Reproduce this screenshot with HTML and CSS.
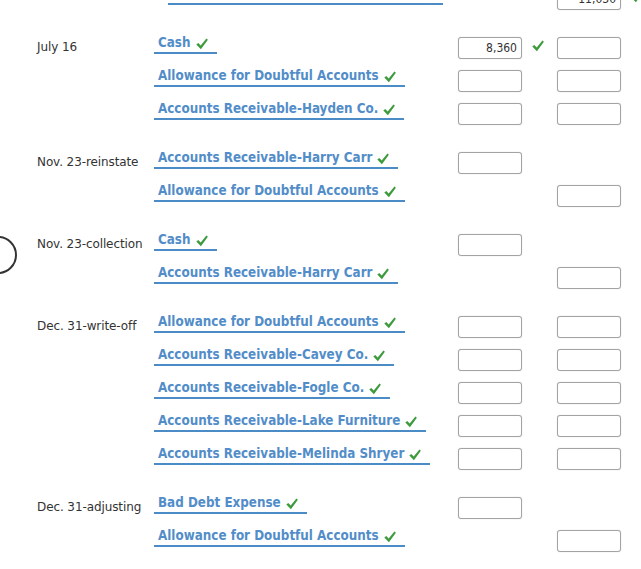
FILE: index.html
```html
<!DOCTYPE html>
<html>
<head>
<meta charset="utf-8">
<link rel="stylesheet" href="styles.css">
</head>
<body>
<div class="ring"></div>
<div class="journal">
  <div class="group partial">
    <div class="row">
      <div class="label"></div>
      <div class="acct-cell"><span class="acct indent"><span class="hidden-name">Accounts Receivable</span><svg class="chk" viewBox="0 0 12 12"><path d="M0.3 6.6 L2.3 4.9 L4.7 7.6 L10.4 0.4 L11.9 1.7 L4.9 11.2 Z"/></svg></span></div>
      <div></div><div></div>
      <input class="amt" type="text" value="11,030">
      <div class="chk-col"><svg class="chk" viewBox="0 0 12 12"><path d="M0.3 6.6 L2.3 4.9 L4.7 7.6 L10.4 0.4 L11.9 1.7 L4.9 11.2 Z"/></svg></div>
    </div>
  </div>

  <div class="group">
    <div class="row">
      <div class="label">July 16</div>
      <div class="acct-cell"><span class="acct">Cash<svg class="chk" viewBox="0 0 12 12"><path d="M0.3 6.6 L2.3 4.9 L4.7 7.6 L10.4 0.4 L11.9 1.7 L4.9 11.2 Z"/></svg></span></div>
      <input class="amt" type="text" value="8,360">
      <div class="chk-col"><svg class="chk" viewBox="0 0 12 12"><path d="M0.3 6.6 L2.3 4.9 L4.7 7.6 L10.4 0.4 L11.9 1.7 L4.9 11.2 Z"/></svg></div>
      <input class="amt" type="text" value="">
    </div>
    <div class="row">
      <div class="label"></div>
      <div class="acct-cell"><span class="acct">Allowance for Doubtful Accounts<svg class="chk" viewBox="0 0 12 12"><path d="M0.3 6.6 L2.3 4.9 L4.7 7.6 L10.4 0.4 L11.9 1.7 L4.9 11.2 Z"/></svg></span></div>
      <input class="amt" type="text" value="">
      <div></div>
      <input class="amt" type="text" value="">
    </div>
    <div class="row">
      <div class="label"></div>
      <div class="acct-cell"><span class="acct">Accounts Receivable-Hayden Co.<svg class="chk" viewBox="0 0 12 12"><path d="M0.3 6.6 L2.3 4.9 L4.7 7.6 L10.4 0.4 L11.9 1.7 L4.9 11.2 Z"/></svg></span></div>
      <input class="amt" type="text" value="">
      <div></div>
      <input class="amt" type="text" value="">
    </div>
  </div>

  <div class="group">
    <div class="row">
      <div class="label">Nov. 23-reinstate</div>
      <div class="acct-cell"><span class="acct">Accounts Receivable-Harry Carr<svg class="chk" viewBox="0 0 12 12"><path d="M0.3 6.6 L2.3 4.9 L4.7 7.6 L10.4 0.4 L11.9 1.7 L4.9 11.2 Z"/></svg></span></div>
      <input class="amt" type="text" value="">
    </div>
    <div class="row">
      <div class="label"></div>
      <div class="acct-cell"><span class="acct">Allowance for Doubtful Accounts<svg class="chk" viewBox="0 0 12 12"><path d="M0.3 6.6 L2.3 4.9 L4.7 7.6 L10.4 0.4 L11.9 1.7 L4.9 11.2 Z"/></svg></span></div>
      <div></div><div></div>
      <input class="amt" type="text" value="">
    </div>
  </div>

  <div class="group">
    <div class="row">
      <div class="label">Nov. 23-collection</div>
      <div class="acct-cell"><span class="acct">Cash<svg class="chk" viewBox="0 0 12 12"><path d="M0.3 6.6 L2.3 4.9 L4.7 7.6 L10.4 0.4 L11.9 1.7 L4.9 11.2 Z"/></svg></span></div>
      <input class="amt" type="text" value="">
    </div>
    <div class="row">
      <div class="label"></div>
      <div class="acct-cell"><span class="acct">Accounts Receivable-Harry Carr<svg class="chk" viewBox="0 0 12 12"><path d="M0.3 6.6 L2.3 4.9 L4.7 7.6 L10.4 0.4 L11.9 1.7 L4.9 11.2 Z"/></svg></span></div>
      <div></div><div></div>
      <input class="amt" type="text" value="">
    </div>
  </div>

  <div class="group">
    <div class="row">
      <div class="label">Dec. 31-write-off</div>
      <div class="acct-cell"><span class="acct">Allowance for Doubtful Accounts<svg class="chk" viewBox="0 0 12 12"><path d="M0.3 6.6 L2.3 4.9 L4.7 7.6 L10.4 0.4 L11.9 1.7 L4.9 11.2 Z"/></svg></span></div>
      <input class="amt" type="text" value="">
      <div></div>
      <input class="amt" type="text" value="">
    </div>
    <div class="row">
      <div class="label"></div>
      <div class="acct-cell"><span class="acct">Accounts Receivable-Cavey Co.<svg class="chk" viewBox="0 0 12 12"><path d="M0.3 6.6 L2.3 4.9 L4.7 7.6 L10.4 0.4 L11.9 1.7 L4.9 11.2 Z"/></svg></span></div>
      <input class="amt" type="text" value="">
      <div></div>
      <input class="amt" type="text" value="">
    </div>
    <div class="row">
      <div class="label"></div>
      <div class="acct-cell"><span class="acct">Accounts Receivable-Fogle Co.<svg class="chk" viewBox="0 0 12 12"><path d="M0.3 6.6 L2.3 4.9 L4.7 7.6 L10.4 0.4 L11.9 1.7 L4.9 11.2 Z"/></svg></span></div>
      <input class="amt" type="text" value="">
      <div></div>
      <input class="amt" type="text" value="">
    </div>
    <div class="row">
      <div class="label"></div>
      <div class="acct-cell"><span class="acct">Accounts Receivable-Lake Furniture<svg class="chk" viewBox="0 0 12 12"><path d="M0.3 6.6 L2.3 4.9 L4.7 7.6 L10.4 0.4 L11.9 1.7 L4.9 11.2 Z"/></svg></span></div>
      <input class="amt" type="text" value="">
      <div></div>
      <input class="amt" type="text" value="">
    </div>
    <div class="row">
      <div class="label"></div>
      <div class="acct-cell"><span class="acct">Accounts Receivable-Melinda Shryer<svg class="chk" viewBox="0 0 12 12"><path d="M0.3 6.6 L2.3 4.9 L4.7 7.6 L10.4 0.4 L11.9 1.7 L4.9 11.2 Z"/></svg></span></div>
      <input class="amt" type="text" value="">
      <div></div>
      <input class="amt" type="text" value="">
    </div>
  </div>

  <div class="group">
    <div class="row">
      <div class="label">Dec. 31-adjusting</div>
      <div class="acct-cell"><span class="acct">Bad Debt Expense<svg class="chk" viewBox="0 0 12 12"><path d="M0.3 6.6 L2.3 4.9 L4.7 7.6 L10.4 0.4 L11.9 1.7 L4.9 11.2 Z"/></svg></span></div>
      <input class="amt" type="text" value="">
    </div>
    <div class="row">
      <div class="label"></div>
      <div class="acct-cell"><span class="acct">Allowance for Doubtful Accounts<svg class="chk" viewBox="0 0 12 12"><path d="M0.3 6.6 L2.3 4.9 L4.7 7.6 L10.4 0.4 L11.9 1.7 L4.9 11.2 Z"/></svg></span></div>
      <div></div><div></div>
      <input class="amt" type="text" value="">
    </div>
  </div>
</div>
</body>
</html>
```
FILE: styles.css
```css
html, body {
  margin: 0;
  padding: 0;
  background: #fff;
  overflow: hidden;
}
body {
  position: relative;
  width: 641px;
  height: 569px;
  font-family: "DejaVu Sans", sans-serif;
}
.ring {
  position: absolute;
  left: -21px;
  top: 236px;
  width: 34px;
  height: 34px;
  border: 2.5px solid #333;
  border-radius: 50%;
}
.journal {
  display: flex;
  flex-direction: column;
  gap: 27px;
  padding-left: 37px;
}
.group {
  display: flex;
  flex-direction: column;
  gap: 11px;
}
.partial {
  margin-top: -14px;
}
.row {
  display: grid;
  grid-template-columns: 117px 304px 64px 35px 64px 20px;
  align-items: center;
  height: 22px;
}
.label {
  font-family: "DejaVu Sans", sans-serif;
  font-size: 12px;
  letter-spacing: -0.1px;
  color: #333;
  white-space: nowrap;
  padding-bottom: 1px;
}
.acct-cell {
  display: flex;
  align-self: center;
  margin-bottom: 6px;
}
.acct {
  display: inline-flex;
  align-items: flex-start;
  box-sizing: content-box;
  height: 16px;
  padding: 1px 9px 0 4px;
  border-bottom: 2px solid #4b8bc6;
  font-family: "DejaVu Sans Condensed", "DejaVu Sans", sans-serif;
  font-stretch: condensed;
  font-size: 13.3px;
  font-weight: bold;
  line-height: 13px;
  color: #528dc9;
  white-space: nowrap;
}
.acct.indent {
  margin-left: 14px;
  width: 262px;
  justify-content: flex-end;
}
.hidden-name {
  visibility: hidden;
  width: 0;
  overflow: hidden;
}
.chk {
  width: 12px;
  height: 12px;
  fill: #3d9b3d;
  flex: none;
}
.acct .chk {
  margin-left: 5px;
  margin-top: 2px;
}
.chk-col {
  display: flex;
  padding-left: 10px;
  padding-bottom: 4px;
}
.amt {
  box-sizing: border-box;
  width: 64px;
  height: 22px;
  margin: 0;
  padding: 0 4px;
  border: 1px solid #a3a3a3;
  border-radius: 3px;
  box-shadow: 0 0 1px rgba(0, 0, 0, 0.25);
  background: #fff;
  font-family: "DejaVu Sans Condensed", "DejaVu Sans", sans-serif;
  font-stretch: condensed;
  font-size: 12px;
  color: #333;
  text-align: right;
  outline: none;
}
```
